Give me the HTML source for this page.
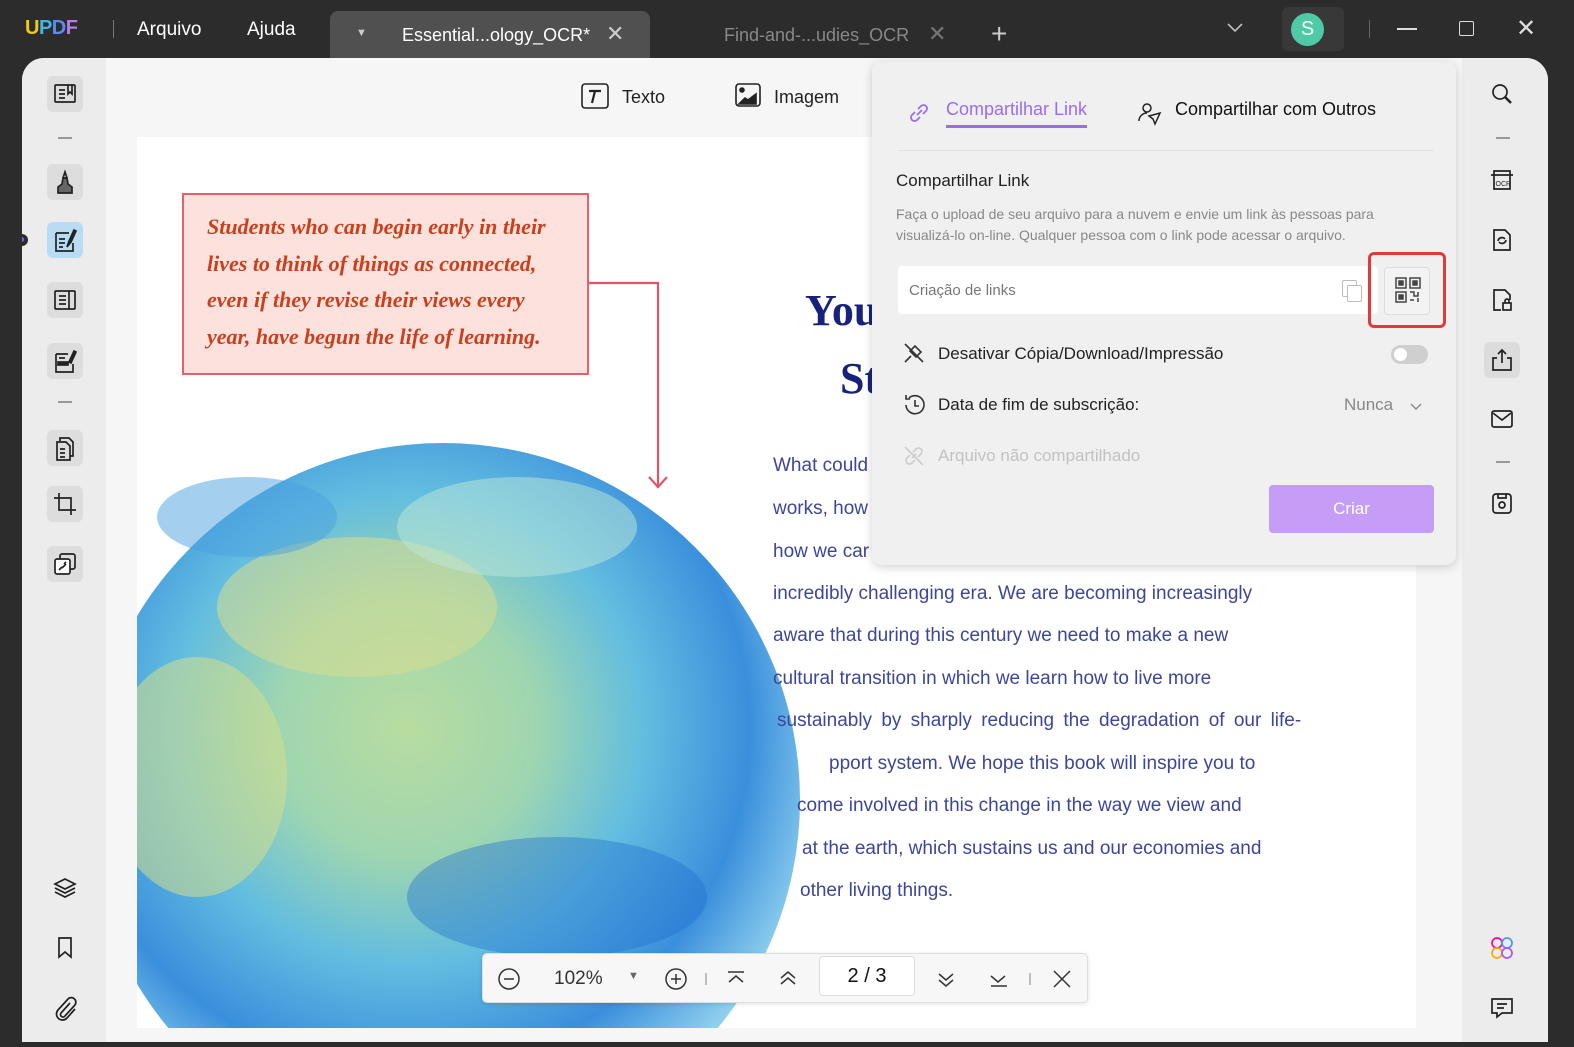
<!DOCTYPE html>
<html><head><meta charset="utf-8"><style>
*{margin:0;padding:0;box-sizing:border-box}
html,body{width:1574px;height:1047px;overflow:hidden}
body{background:#2c2c2c;font-family:"Liberation Sans",sans-serif;position:relative}
.abs{position:absolute}
.tb{color:#fff;font-size:19px}
.main{left:22px;top:58px;width:1526px;height:984px;background:#f6f6f6;border-radius:22px 22px 0 0;overflow:hidden}
.lsb{left:0;top:0;width:84px;height:984px;background:#ececec}
.rsb{left:1440px;top:0;width:86px;height:984px;background:#ececec}
.ic{position:absolute;width:36px;height:36px;border-radius:6px;display:flex;align-items:center;justify-content:center}
.ic svg{width:26px;height:26px;fill:none;stroke:#222;stroke-width:1.7}
.dash{position:absolute;width:14px;height:1.5px;background:#999}
.page{left:115px;top:79px;width:1279px;height:891px;background:#fff;overflow:hidden}
.para{position:absolute;left:636px;color:#3d4699;font-size:19px;white-space:nowrap}
.panel{left:872px;top:62px;width:584px;height:503px;background:#f0f0f0;border-radius:10px;box-shadow:0 2px 10px rgba(0,0,0,.18)}
.pt{position:absolute;white-space:nowrap}
</style></head><body>
<div class="abs" style="left:25px;top:17px;font-weight:bold;font-size:20px;letter-spacing:-0.5px"><span style="color:#f5c518">U</span><span style="color:#3fb6e8">P</span><span style="color:#5a8cf0">D</span><span style="color:#b57cf0">F</span></div>
<div class="abs" style="left:113px;top:20px;width:1px;height:18px;background:#777"></div>
<div class="abs tb" style="left:137px;top:19px">Arquivo</div>
<div class="abs tb" style="left:247px;top:19px">Ajuda</div>
<div class="abs" style="left:330px;top:11px;width:320px;height:48px;background:#505050;border-radius:8px 8px 0 0"></div>
<div class="abs" style="left:356px;top:27px;color:#ccc;font-size:11px">▼</div>
<div class="abs" style="left:402px;top:25px;color:#fff;font-size:18px">Essential...ology_OCR*</div>
<div class="abs" style="left:606px;top:21px;color:#ccc;font-size:22px">✕</div>
<div class="abs" style="left:724px;top:25px;color:#888;font-size:18px">Find-and-...udies_OCR</div>
<div class="abs" style="left:928px;top:21px;color:#777;font-size:22px">✕</div>
<div class="abs" style="left:991px;top:18px;color:#ccc;font-size:28px;font-weight:300">+</div>
<svg class="abs" style="left:1226px;top:22px" width="18" height="12"><path d="M2 2l7 7 7-7" stroke="#bbb" stroke-width="1.6" fill="none"/></svg>
<div class="abs" style="left:1282px;top:7px;width:62px;height:44px;background:#383838;border-radius:6px"></div>
<div class="abs" style="left:1291px;top:13px;width:33px;height:33px;border-radius:50%;background:#4ecaa7;color:#fff;font-size:20px;text-align:center;line-height:33px">S</div>
<div class="abs" style="left:1369px;top:20px;width:1px;height:18px;background:#666"></div>
<div class="abs" style="left:1397px;top:28px;width:20px;height:1.6px;background:#ddd"></div>
<div class="abs" style="left:1459px;top:21px;width:15px;height:15px;border:1.6px solid #ddd;border-radius:2px"></div>
<div class="abs" style="left:1516px;top:14px;color:#ddd;font-size:24px">✕</div>

<div class="abs main">
 <div class="abs lsb"></div>
 <div class="abs" style="left:0;top:176px;width:6px;height:12px;border-radius:0 6px 6px 0;background:#2c2c2c"></div>
 <div class="abs" style="left:-3px;top:179px;width:5px;height:5px;border-radius:50%;background:#8b5cf6"></div>
 <div class="ic" style="left:25px;top:18px;background:#ddd"><svg viewBox="0 0 26 26"><rect x="3" y="4" width="20" height="17" rx="1"/><path d="M7 9h6M7 13h6M7 17h6M16 4v9l2-2 2 2V4"/></svg></div>
 <div class="dash" style="left:36px;top:79px"></div>
 <div class="ic" style="left:25px;top:106px;background:#ddd"><svg viewBox="0 0 26 26"><path d="M6 24v-6l4-3 1-6 4 0 1 6 4 3v6z" fill="#666"/><path d="M11 9l2-6 2 6"/></svg></div>
 <div class="ic" style="left:25px;top:164px;background:#b9dcf5"><svg viewBox="0 0 26 26"><path d="M4 6h13M4 6v18h17v-8"/><path d="M7 12h6M7 16h6M7 20h4M15 20l2-6 5-11 2 1-5 11z" fill="#222"/></svg></div>
 <div class="ic" style="left:25px;top:224px;background:#ddd"><svg viewBox="0 0 26 26"><rect x="3" y="4" width="20" height="18" rx="1"/><path d="M7 9h7M7 13h7M7 17h7M17 4v18"/></svg></div>
 <div class="ic" style="left:25px;top:285px;background:#ddd"><svg viewBox="0 0 26 26"><path d="M4 6h12M4 6v18h17v-8"/><rect x="6" y="14" width="10" height="3" fill="#222"/><path d="M7 10h6M17 14l5-11 2 1-5 11z" fill="#222"/></svg></div>
 <div class="dash" style="left:36px;top:343px"></div>
 <div class="ic" style="left:25px;top:372px;background:#ddd"><svg viewBox="0 0 26 26"><path d="M8 6V3h9l4 4v14h-3"/><path d="M5 7h9l4 4v14H5z"/><path d="M8 14h5M8 18h5M8 22h5"/></svg></div>
 <div class="ic" style="left:25px;top:428px;background:#ddd"><svg viewBox="0 0 26 26"><path d="M7 2v17h17M2 7h17v17"/></svg></div>
 <div class="ic" style="left:25px;top:488px;background:#ddd"><svg viewBox="0 0 26 26"><rect x="8" y="3" width="15" height="15" rx="2"/><rect x="3" y="8" width="15" height="15" rx="2" fill="#fff"/><path d="M7 19l3-3M10 17l4-4M12 13l2-2"/></svg></div>
 <div class="ic" style="left:25px;top:812px"><svg viewBox="0 0 26 26"><path d="M13 4l10 5-10 5-10-5z"/><path d="M3 13l10 5 10-5M3 17l10 5 10-5"/></svg></div>
 <div class="ic" style="left:25px;top:872px"><svg viewBox="0 0 26 26"><path d="M7 3h12v19l-6-5-6 5z"/></svg></div>
 <div class="ic" style="left:25px;top:932px"><svg viewBox="0 0 26 26"><path d="M18 8l-9 10a2.5 2.5 0 0 0 3.5 3.5l10-11a4.5 4.5 0 0 0-6.5-6.5l-10 11a6 6 0 0 0 9 8l8-9"/></svg></div>

 <svg class="abs" style="left:558px;top:24px" width="30" height="28" viewBox="0 0 30 28" fill="none" stroke="#222" stroke-width="1.6"><rect x="2" y="2" width="26" height="24" rx="3"/><path d="M9 9h12M15 9l-3 12" stroke-width="2.2"/></svg>
 <div class="abs" style="left:600px;top:29px;font-size:18px;color:#222">Texto</div>
 <svg class="abs" style="left:712px;top:24px" width="28" height="26" viewBox="0 0 28 26" fill="none" stroke="#222" stroke-width="1.6"><rect x="2" y="2" width="24" height="22" rx="3"/><circle cx="8" cy="8" r="2" fill="#222"/><path d="M5 22l6-6 3 2 8-6v10z" fill="#222"/></svg>
 <div class="abs" style="left:752px;top:29px;font-size:18px;color:#222">Imagem</div>

 <div class="abs page">
  <svg class="abs" style="left:0;top:0" width="1279" height="891">
   <defs>
    <radialGradient id="g" cx="45%" cy="40%" r="60%">
     <stop offset="0" stop-color="#b8dca0"/><stop offset=".3" stop-color="#9fd6b0"/><stop offset=".55" stop-color="#62bde0"/><stop offset=".8" stop-color="#3a8fdc"/><stop offset="1" stop-color="#8fd0ee"/>
    </radialGradient>
   </defs>
   <circle cx="306" cy="663" r="357" fill="url(#g)"/>
   <ellipse cx="220" cy="470" rx="140" ry="70" fill="#d8dc90" opacity=".55"/>
   <ellipse cx="60" cy="640" rx="90" ry="120" fill="#d6df8a" opacity=".55"/>
   <ellipse cx="420" cy="760" rx="150" ry="60" fill="#1f6fd0" opacity=".4"/>
   <ellipse cx="380" cy="390" rx="120" ry="50" fill="#bfe8d8" opacity=".5"/>
   <ellipse cx="110" cy="380" rx="90" ry="40" fill="#4aa0e0" opacity=".5"/>
   <path d="M452 146h69v205" fill="none" stroke="#e05565" stroke-width="2.2"/>
   <path d="M512 340l9 10 9-10" fill="none" stroke="#e05565" stroke-width="2.2"/>
  </svg>
  <div class="abs" style="left:45px;top:56px;width:407px;height:182px;background:#fde1dc;border:2px solid #e8606a"></div>
  <div class="abs" style="left:70px;top:72px;font-family:'Liberation Serif',serif;font-style:italic;font-weight:bold;font-size:22px;color:#c9401f;line-height:36.5px;white-space:nowrap">Students who can begin early in their<br>lives to think of things as connected,<br>even if they revise their views every<br>year, have begun the life of learning.</div>
  <div class="abs" style="left:668px;top:148px;font-family:'Liberation Serif',serif;font-weight:bold;font-size:44px;color:#17237a">You</div>
  <div class="abs" style="left:703px;top:216px;font-family:'Liberation Serif',serif;font-weight:bold;font-size:44px;color:#17237a">St</div>
  <div class="para" style="top:318px">What could</div>
  <div class="para" style="top:361px">works, how</div>
  <div class="para" style="top:404px">how we car</div>
  <div class="para" style="top:446px">incredibly challenging era. We are becoming increasingly</div>
  <div class="para" style="top:488px">aware that during this century we need to make a new</div>
  <div class="para" style="top:531px">cultural transition in which we learn how to live more</div>
  <div class="para" style="top:573px;left:640px;word-spacing:4px">sustainably by sharply reducing the degradation of our life-</div>
  <div class="para" style="top:616px;left:692px">pport system. We hope this book will inspire you to</div>
  <div class="para" style="top:658px;left:660px">come involved in this change in the way we view and</div>
  <div class="para" style="top:701px;left:665px">at the earth, which sustains us and our economies and</div>
  <div class="para" style="top:743px;left:663px">other living things.</div>
 </div>

 <div class="abs" style="left:460px;top:895px;width:606px;height:50px;background:#f7f7f7;border:1px solid #ddd;border-radius:5px;box-shadow:0 1px 4px rgba(0,0,0,.12)"></div>
 <svg class="abs" style="left:474px;top:908px" width="600" height="26" fill="none" stroke="#333" stroke-width="1.5">
  <circle cx="13" cy="13" r="10"/><path d="M8 13h10"/>
  <circle cx="180" cy="13" r="10"/><path d="M175 13h10M180 8v10"/>
  <path d="M210 7v12" stroke="#aaa"/>
  <path d="M232 6h16M233 16l7-6 7 6"/>
  <path d="M285 12l7-6 7 6M285 18l7-6 7 6"/>
  <path d="M443 8l7 6 7-6M443 14l7 6 7-6"/>
  <path d="M495 10l7 6 7-6M495 20h16"/>
  <path d="M534 7v12" stroke="#aaa"/>
  <path d="M558 5l16 16M574 5l-16 16"/>
 </svg>
 <div class="abs" style="left:532px;top:910px;font-size:19px;color:#333">102%</div>
 <div class="abs" style="left:606px;top:912px;font-size:11px;color:#666">▼</div>
 <div class="abs" style="left:797px;top:898px;width:96px;height:40px;background:#fff;border:1px solid #ddd;border-radius:4px;text-align:center;line-height:38px;font-size:20px;color:#111">2 / 3</div>

 <div class="abs rsb"></div>
 <div class="ic" style="left:1462px;top:18px"><svg viewBox="0 0 26 26"><circle cx="11" cy="11" r="7"/><path d="M16 16l6 6" stroke-width="2.5"/></svg></div>
 <div class="dash" style="left:1474px;top:79px"></div>
 <div class="ic" style="left:1462px;top:104px"><svg viewBox="0 0 26 26"><path d="M2 8h22M5 8V4h16v4M5 8v14h16V8"/><text x="6.5" y="19" font-size="7" stroke="none" fill="#222" font-family="Liberation Sans">OCR</text></svg></div>
 <div class="ic" style="left:1462px;top:164px"><svg viewBox="0 0 26 26"><path d="M5 3h11l5 5v15H5z"/><path d="M9 14a4 4 0 0 1 7-2M17 13a4 4 0 0 1-7 2"/></svg></div>
 <div class="ic" style="left:1462px;top:224px"><svg viewBox="0 0 26 26"><path d="M12 23H5V3h11l5 5v5"/><rect x="14" y="16" width="8" height="7"/><path d="M16 16v-2a2 2 0 0 1 4 0v2"/></svg></div>
 <div class="ic" style="left:1462px;top:284px;background:#dcdcdc"><svg viewBox="0 0 26 26"><path d="M8 11H4v12h18V11h-4M13 3v13M9 7l4-4 4 4"/></svg></div>
 <div class="ic" style="left:1462px;top:343px"><svg viewBox="0 0 26 26"><rect x="3" y="5" width="20" height="16" rx="2"/><path d="M4 7l9 7 9-7"/></svg></div>
 <div class="dash" style="left:1474px;top:403px"></div>
 <div class="ic" style="left:1462px;top:427px"><svg viewBox="0 0 26 26"><rect x="4" y="4" width="18" height="19" rx="3"/><path d="M9 4v4h8V4"/><circle cx="13" cy="15" r="3"/></svg></div>
 <div class="ic" style="left:1462px;top:872px"><svg viewBox="0 0 26 26"><circle cx="8" cy="8" r="5" stroke="#f0a"/><circle cx="18" cy="8" r="5" stroke="#49f"/><circle cx="8" cy="18" r="5" stroke="#fa0"/><circle cx="18" cy="18" r="5" stroke="#a5f"/></svg></div>
 <div class="ic" style="left:1462px;top:932px"><svg viewBox="0 0 26 26"><path d="M3 4h20v14H13l-5 4v-4H3z"/><path d="M8 9h10M8 13h7"/></svg></div>
</div>

<div class="abs panel">
 <svg class="pt" style="left:34px;top:38px" width="26" height="26" viewBox="0 0 26 26" fill="none" stroke="#9b6cf0" stroke-width="1.8"><path d="M11 15l5-5M9 12l-3 3a3.5 3.5 0 0 0 5 5l3-3M17 14l3-3a3.5 3.5 0 0 0-5-5l-3 3"/></svg>
 <div class="pt" style="left:74px;top:37px;font-size:18px;color:#9b6cf0">Compartilhar Link</div>
 <div class="pt" style="left:74px;top:63px;width:141px;height:2.5px;background:#9b6cf0"></div>
 <svg class="pt" style="left:264px;top:38px" width="28" height="28" viewBox="0 0 28 28" fill="none" stroke="#222" stroke-width="1.5"><circle cx="11" cy="8" r="4"/><path d="M3 21c0-5 4-8 8-8M13 16l11-3-5 11-2-5z"/></svg>
 <div class="pt" style="left:303px;top:37px;font-size:18px;color:#111">Compartilhar com Outros</div>
 <div class="pt" style="left:26px;top:88px;width:536px;height:1px;background:#e0e0e0"></div>
 <div class="pt" style="left:24px;top:109px;font-size:17px;color:#222">Compartilhar Link</div>
 <div class="pt" style="left:24px;top:142px;font-size:14px;color:#888;line-height:21px">Faça o upload de seu arquivo para a nuvem e envie um link às pessoas para<br>visualizá-lo on-line. Qualquer pessoa com o link pode acessar o arquivo.</div>
 <div class="pt" style="left:26px;top:204px;width:480px;height:48px;background:#fff;border-radius:4px"></div>
 <div class="pt" style="left:37px;top:220px;font-size:15px;color:#777">Criação de links</div>
 <div class="pt" style="left:470px;top:218px;width:15px;height:17px;border:1.3px solid #bbb;border-radius:2px"></div>
 <div class="pt" style="left:475px;top:223px;width:15px;height:17px;border:1.3px solid #bbb;border-radius:2px;background:#fff"></div>
 <div class="pt" style="left:496px;top:190px;width:78px;height:76px;border:3.5px solid #e23a3a;border-radius:6px"></div>
 <div class="pt" style="left:512px;top:205px;width:46px;height:48px;background:#f3f3f3;border:1px solid #ddd;border-radius:4px"></div>
 <svg class="pt" style="left:522px;top:214px" width="28" height="28" viewBox="0 0 28 28" fill="none" stroke="#444" stroke-width="1.5"><rect x="2" y="2" width="10" height="10"/><rect x="16" y="2" width="10" height="10"/><rect x="2" y="16" width="10" height="10"/><rect x="5" y="5" width="4" height="4" fill="#444"/><rect x="19" y="5" width="4" height="4" fill="#444"/><rect x="5" y="19" width="4" height="4" fill="#444"/><path d="M16 16h4v4h4v-4M16 24h4M24 22v4"/></svg>
 <svg class="pt" style="left:30px;top:279px" width="24" height="24" viewBox="0 0 24 24" fill="none" stroke="#333" stroke-width="1.6"><path d="M3 21l6-6M8 10l6 6 5-5-6-6zM3 3l18 18"/></svg>
 <div class="pt" style="left:66px;top:282px;font-size:17px;color:#222">Desativar Cópia/Download/Impressão</div>
 <div class="pt" style="left:519px;top:283px;width:37px;height:19px;border-radius:10px;background:#cfcfcf"></div>
 <div class="pt" style="left:522px;top:286px;width:13px;height:13px;border-radius:50%;background:#fff"></div>
 <svg class="pt" style="left:30px;top:330px" width="26" height="26" viewBox="0 0 26 26" fill="none" stroke="#333" stroke-width="1.6"><path d="M4 13a9 9 0 1 0 3-7M4 3v4h4M13 8v6h4"/></svg>
 <div class="pt" style="left:66px;top:333px;font-size:17px;color:#222">Data de fim de subscrição:</div>
 <div class="pt" style="left:472px;top:333px;font-size:17px;color:#888">Nunca</div>
 <svg class="pt" style="left:537px;top:340px" width="14" height="10"><path d="M2 2l5 5 5-5" stroke="#888" stroke-width="1.4" fill="none"/></svg>
 <svg class="pt" style="left:30px;top:382px" width="24" height="24" viewBox="0 0 24 24" fill="none" stroke="#ccc" stroke-width="1.6"><path d="M10 14l4-4M8 11l-3 3a3 3 0 0 0 5 5l3-3M16 13l3-3a3 3 0 0 0-5-5l-3 3M3 3l18 18"/></svg>
 <div class="pt" style="left:66px;top:384px;font-size:17px;color:#c2c2c2">Arquivo não compartilhado</div>
 <div class="pt" style="left:397px;top:423px;width:165px;height:48px;border-radius:4px;background:#c59cf6;color:#fff;font-size:17px;text-align:center;line-height:48px">Criar</div>
</div>
</body></html>
